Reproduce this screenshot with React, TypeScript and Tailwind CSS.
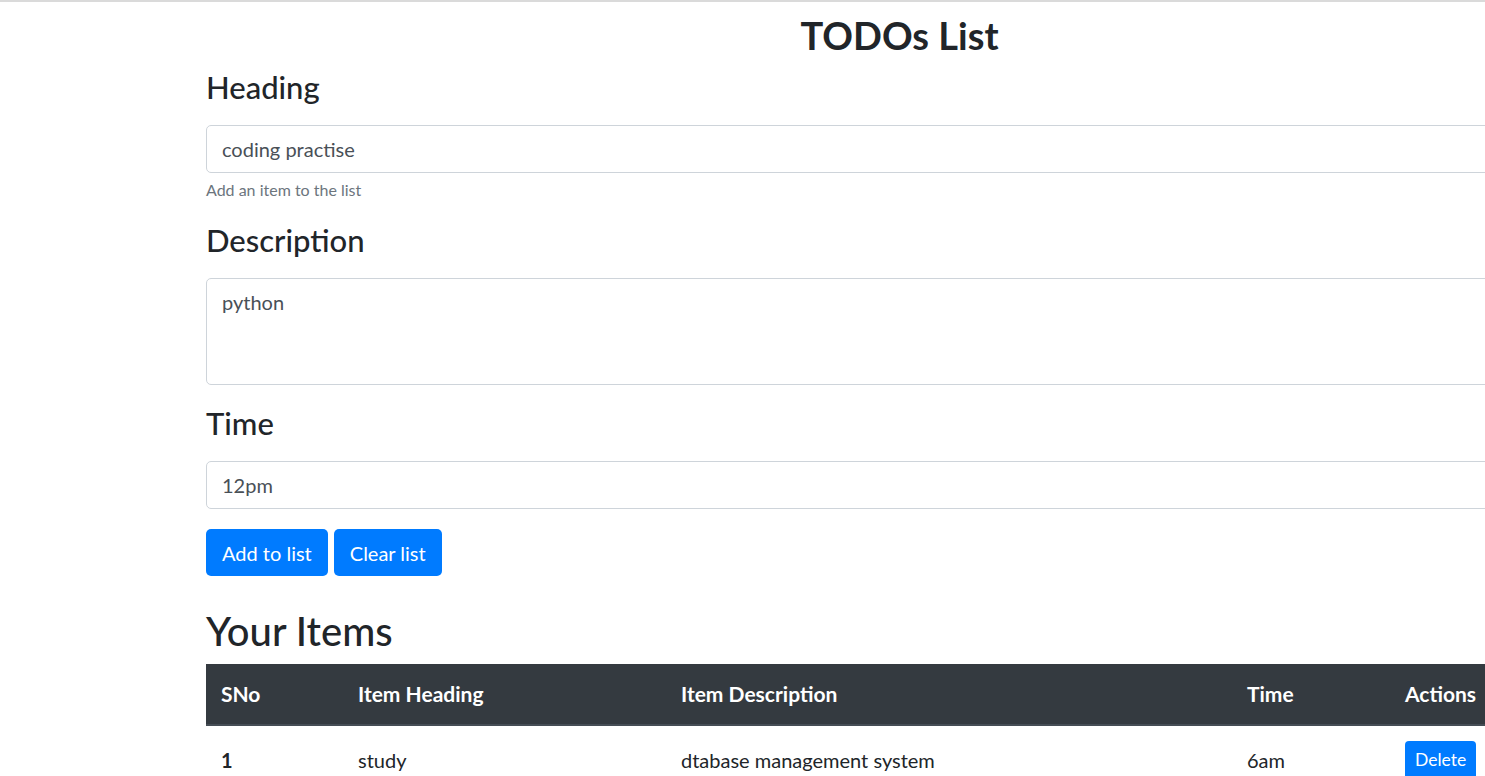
import React from 'react';

const font = { fontFamily: 'Lato, "Open Sans", Arial, sans-serif' };

interface Todo {
  sno: number;
  title: string;
  desc: string;
  time: string;
}

const todos: Todo[] = [{ sno: 1, title: 'study', desc: 'dtabase management system', time: '6am' }];

function Field({ label, value, hint, area }: { label: string; value: string; hint?: string; area?: boolean }) {
  return (
    <div className="mb-[19px]">
      <h3 className="text-[31px] leading-[38px] font-medium text-[#212529] mb-[19px]">{label}</h3>
      {area ? (
        <div className="h-[107px] border border-[#ced4da] rounded-[5px] px-[15px] py-[8px] text-[20px] leading-[30px] text-[#495057]">
          {value}
        </div>
      ) : (
        <div className="h-[48px] border border-[#ced4da] rounded-[5px] px-[15px] flex items-center text-[20px] text-[#495057]">
          {value}
        </div>
      )}
      {hint && <p className="mt-[5px] text-[16px] leading-[24px] text-[#6c757d]">{hint}</p>}
    </div>
  );
}

export default function App() {
  return (
    <div className="h-screen w-full overflow-hidden bg-white text-[#212529]" style={font}>
      <div className="border-t-2 border-[#dadada]" />
      <div className="ml-[187px] w-[1425px] px-[19px]">
        <h2 className="text-center text-[38px] leading-[48px] font-bold mt-[9px] mb-[9px]">TODOs List</h2>

        <Field label="Heading" value="coding practise" hint="Add an item to the list" />
        <Field label="Description" value="python" area />
        <Field label="Time" value="12pm" />

        <div className="flex gap-[6px] mt-[20px]">
          <button className="h-[47px] px-[16px] rounded-[5px] bg-[#007bff] text-white text-[20px]">Add to list</button>
          <button className="h-[47px] px-[16px] rounded-[5px] bg-[#007bff] text-white text-[20px]">Clear list</button>
        </div>

        <h2 className="text-[40px] leading-[48px] font-medium mt-[31px] mb-[9px]">Your Items</h2>

        <table className="w-full table-fixed border-collapse text-[20px] leading-[30px]">
          <thead className="bg-[#343a40] text-white">
            <tr>
              <th className="w-[137px] text-left font-bold text-[21px] px-[15px] py-[15px] border-b-2 border-[#454d55]">SNo</th>
              <th className="w-[323px] text-left font-bold text-[21px] px-[15px] py-[15px] border-b-2 border-[#454d55]">Item Heading</th>
              <th className="w-[566px] text-left font-bold text-[21px] px-[15px] py-[15px] border-b-2 border-[#454d55]">Item Description</th>
              <th className="w-[158px] text-left font-bold text-[21px] px-[15px] py-[15px] border-b-2 border-[#454d55]">Time</th>
              <th className="text-left font-bold text-[21px] px-[15px] py-[15px] border-b-2 border-[#454d55]">Actions</th>
            </tr>
          </thead>
          <tbody>
            {todos.map((t) => (
              <tr key={t.sno} className="border-t border-[#dee2e6]">
                <td className="px-[15px] py-[15px] font-bold">{t.sno}</td>
                <td className="px-[15px] py-[15px]">{t.title}</td>
                <td className="px-[15px] py-[15px]">{t.desc}</td>
                <td className="px-[15px] py-[15px]">{t.time}</td>
                <td className="px-[15px] py-[15px]">
                  <button className="h-[38px] px-[10px] rounded-[4px] bg-[#007bff] text-white text-[17.5px]">Delete</button>
                </td>
              </tr>
            ))}
          </tbody>
        </table>
      </div>
    </div>
  );
}
